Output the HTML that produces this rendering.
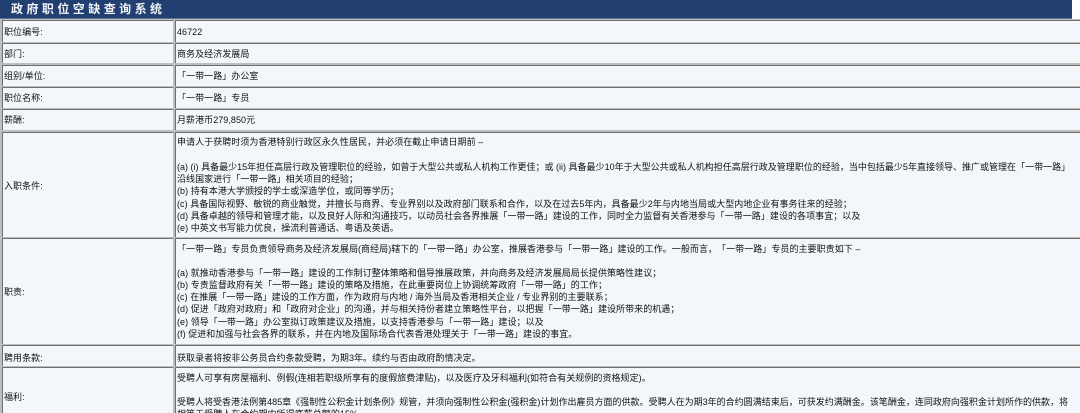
<!DOCTYPE html>
<html lang="zh-CN">
<head>
<meta charset="utf-8">
<title>政府职位空缺查询系统</title>
<style>
html,body{margin:0;padding:0;background:#fff;}
body{width:1080px;height:413px;overflow:hidden;position:relative;font-family:"Liberation Sans","Noto Sans CJK SC",sans-serif;font-size:9px;color:#111;text-spacing-trim:space-all;}
#hd{position:absolute;left:0;top:0;width:1072px;height:18px;background:#213f70;border-bottom:1px solid #5a7396;}
#hd span{position:absolute;left:11px;top:1px;font-size:12px;line-height:16px;font-weight:bold;color:#f2f4f8;letter-spacing:3.45px;white-space:nowrap;filter:blur(.3px);}
#all{position:absolute;left:0;top:0;width:1080px;height:413px;filter:blur(.35px);}
#wrap{position:absolute;left:0;top:19px;width:1080px;height:394px;background:#bdbec0;}
.c{position:absolute;background:#f3f7fc;border-top:1px solid #6f6f6f;border-left:1px solid #6f6f6f;box-sizing:border-box;overflow:hidden;}
.l{left:2px;width:171px;}
.r{left:175px;width:905px;}
.t{position:absolute;left:1px;white-space:nowrap;line-height:12px;letter-spacing:.05px;}
</style>
</head>
<body>
<div id="hd"><span>政府职位空缺查询系统</span></div>
<div id="all">
<div id="wrap"></div>

<div class="c l" style="top:20px;height:22px"><div class="t" style="top:5px">职位编号:</div></div>
<div class="c r" style="top:20px;height:22px"><div class="t" style="top:5px">46722</div></div>

<div class="c l" style="top:43px;height:20px"><div class="t" style="top:4px">部门:</div></div>
<div class="c r" style="top:43px;height:20px"><div class="t" style="top:4px">商务及经济发展局</div></div>

<div class="c l" style="top:65px;height:21px"><div class="t" style="top:4px">组别/单位:</div></div>
<div class="c r" style="top:65px;height:21px"><div class="t" style="top:4px">「一带一路」办公室</div></div>

<div class="c l" style="top:87px;height:21px"><div class="t" style="top:4px">职位名称:</div></div>
<div class="c r" style="top:87px;height:21px"><div class="t" style="top:4px">「一带一路」专员</div></div>

<div class="c l" style="top:109px;height:21px"><div class="t" style="top:4px">薪酬:</div></div>
<div class="c r" style="top:109px;height:21px"><div class="t" style="top:4px">月薪港币279,850元</div></div>

<div class="c l" style="top:132px;height:105px"><div class="t" style="top:47px">入职条件:</div></div>
<div class="c r" style="top:132px;height:105px">
<div class="t" style="top:3px">申请人于获聘时须为香港特别行政区永久性居民，并必须在截止申请日期前 –</div>
<div class="t" style="top:28px;letter-spacing:.01px">(a) (i) 具备最少15年担任高层行政及管理职位的经验，如曾于大型公共或私人机构工作更佳；或 (ii) 具备最少10年于大型公共或私人机构担任高层行政及管理职位的经验，当中包括最少5年直接领导、推广或管理在「一带一路」</div>
<div class="t" style="top:40px">沿线国家进行「一带一路」相关项目的经验；</div>
<div class="t" style="top:52px">(b) 持有本港大学颁授的学士或深造学位，或同等学历；</div>
<div class="t" style="top:65px">(c) 具备国际视野、敏锐的商业触觉，并擅长与商界、专业界别以及政府部门联系和合作，以及在过去5年内，具备最少2年与内地当局或大型内地企业有事务往来的经验；</div>
<div class="t" style="top:77px">(d) 具备卓越的领导和管理才能，以及良好人际和沟通技巧，以动员社会各界推展「一带一路」建设的工作，同时全力监督有关香港参与「一带一路」建设的各项事宜；以及</div>
<div class="t" style="top:89px">(e) 中英文书写能力优良，操流利普通话、粤语及英语。</div>
</div>

<div class="c l" style="top:238px;height:106px"><div class="t" style="top:47px">职责:</div></div>
<div class="c r" style="top:238px;height:106px">
<div class="t" style="top:4px">「一带一路」专员负责领导商务及经济发展局(商经局)辖下的「一带一路」办公室，推展香港参与「一带一路」建设的工作。一般而言，「一带一路」专员的主要职责如下 –</div>
<div class="t" style="top:28px">(a) 就推动香港参与「一带一路」建设的工作制订整体策略和倡导推展政策，并向商务及经济发展局局长提供策略性建议；</div>
<div class="t" style="top:40px">(b) 专责监督政府有关「一带一路」建设的策略及措施，在此重要岗位上协调统筹政府「一带一路」的工作；</div>
<div class="t" style="top:52px">(c) 在推展「一带一路」建设的工作方面，作为政府与内地 / 海外当局及香港相关企业 / 专业界别的主要联系；</div>
<div class="t" style="top:64px">(d) 促进「政府对政府」和「政府对企业」的沟通，并与相关持份者建立策略性平台，以把握「一带一路」建设所带来的机遇；</div>
<div class="t" style="top:77px">(e) 领导「一带一路」办公室拟订政策建议及措施，以支持香港参与「一带一路」建设；以及</div>
<div class="t" style="top:89px">(f) 促进和加强与社会各界的联系，并在内地及国际场合代表香港处理关于「一带一路」建设的事宜。</div>
</div>

<div class="c l" style="top:345px;height:21px"><div class="t" style="top:6px">聘用条款:</div></div>
<div class="c r" style="top:345px;height:21px"><div class="t" style="top:6px">获取录者将按非公务员合约条款受聘，为期3年。续约与否由政府酌情决定。</div></div>

<div class="c l" style="top:367px;height:46px"><div class="t" style="top:23px">福利:</div></div>
<div class="c r" style="top:367px;height:46px">
<div class="t" style="top:4px">受聘人可享有房屋福利、例假(连相若职级所享有的度假旅费津贴)，以及医疗及牙科福利(如符合有关规例的资格规定)。</div>
<div class="t" style="top:28px;letter-spacing:.01px">受聘人将受香港法例第485章《强制性公积金计划条例》规管，并须向强制性公积金(强积金)计划作出雇员方面的供款。受聘人在为期3年的合约圆满结束后，可获发约满酬金。该笔酬金，连同政府向强积金计划所作的供款，将</div>
<div class="t" style="top:40px">相等于受聘人在合约期内所得底薪总额的15%。</div>
</div>
</div>
</body>
</html>
